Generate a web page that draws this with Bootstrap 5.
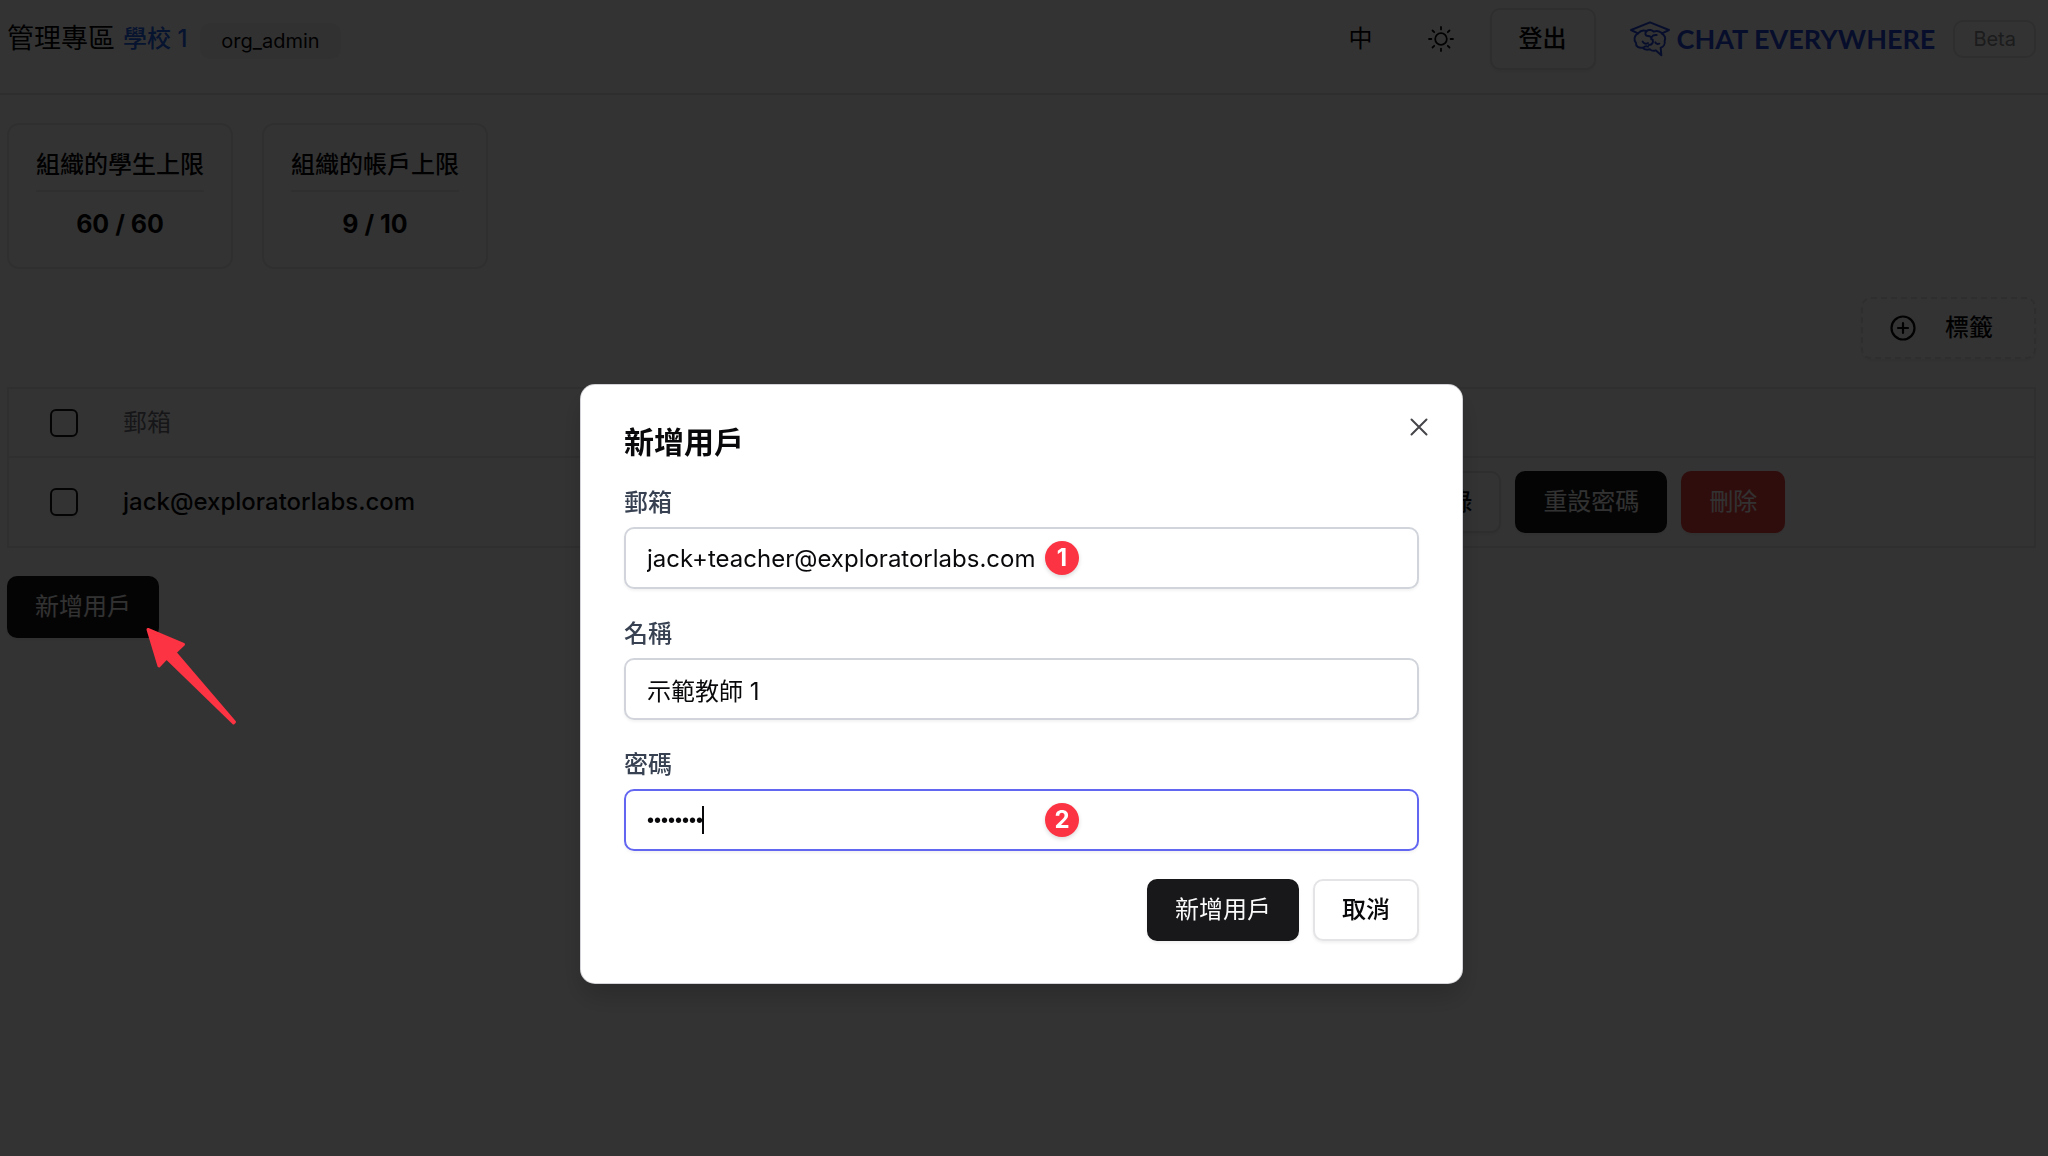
<!DOCTYPE html>
<html lang="zh-Hant">
<head>
<meta charset="utf-8">
<meta name="viewport" content="width=device-width, initial-scale=1">
<title>管理專區</title>
<link href="https://cdn.jsdelivr.net/npm/bootstrap@5.3.0/dist/css/bootstrap.min.css" rel="stylesheet">
<style>
  :root { --line: #e4e4e7; --line-soft: #ebebee; --ink: #09090b; --solid: #18181b; --brand: #2549d8; --mark: #fc3342; }
  body { font-family: Inter, "Noto Sans CJK TC", sans-serif; font-size: 24px; line-height: 28px; color: var(--ink); background: #fff; min-height: 100vh; }
  .page-pad { padding-left: 7px; padding-right: 12px; }
  .topbar { padding-top: 8px; padding-bottom: 23px; border-bottom: 2px solid var(--line); }
  .topbar h1 { font-size: 27px; line-height: 32px; font-weight: 400; }
  .identity { height: 62px; }
  .org-name { color: #2563eb; font-size: 24px; font-weight: 500; }
  .pill { font-size: 20px; line-height: 24px; padding: 6px 21px; border-radius: 10px; }
  .pill-role { background: #f4f4f5; margin: 3px 0 0 13px; }
  .pill-beta { border: 2px solid var(--line); color: #8a8a90; padding: 5px 18px; }
  .ui-btn { --bs-btn-font-size: 24px; --bs-btn-line-height: 28px; --bs-btn-padding-x: 26px; --bs-btn-padding-y: 15px; --bs-btn-border-width: 2px; --bs-btn-border-radius: 10px; --bs-btn-font-weight: 500; box-shadow: 0 2px 3px rgba(0,0,0,.06); }
  .ui-solid { --bs-btn-bg: var(--solid); --bs-btn-border-color: var(--solid); --bs-btn-color: #fafafa; --bs-btn-hover-bg: #303036; --bs-btn-hover-color: #fff; --bs-btn-font-weight: 400; }
  .ui-outline { --bs-btn-bg: #fff; --bs-btn-border-color: var(--line); --bs-btn-color: var(--ink); --bs-btn-hover-bg: #f4f4f5; --bs-btn-padding-x: 27px; }
  .ui-danger { --bs-btn-bg: #ef4444; --bs-btn-border-color: #ef4444; --bs-btn-color: #fafafa; --bs-btn-hover-bg: #dc2626; --bs-btn-font-weight: 400; }
  .ui-dashed { border-style: dashed; padding-right: 41px; gap: 29px; }
  .ui-ghost { width: 62px; height: 62px; padding: 0; border: 0; font-size: 24px; color: var(--ink); }
  .tools { gap: 18px; }
  .brand-link { color: var(--brand); font-family: Lato, sans-serif; font-weight: 700; font-size: 27px; gap: 7px; margin-left: 16px; }
  .page-body { padding-top: 28px; gap: 28px; }
  .quota-row { gap: 29px; }
  .quota { border: 2px solid var(--line-soft); border-radius: 12px; padding: 26px 27px; height: 146px; text-align: center; }
  .quota h2 { font-size: 24px; line-height: 28px; font-weight: 500; padding-bottom: 11px; border-bottom: 2px solid var(--line-soft); margin-bottom: 18px; }
  .quota strong { font-size: 25px; }
  .users { border: 2px solid var(--line-soft); margin: 0; --bs-table-color: var(--ink); --bs-table-bg: transparent; }
  .users > :not(caption) > * > * { padding: 0 9px; vertical-align: middle; border-bottom: 2px solid var(--line-soft); }
  .users thead th { height: 69px; font-weight: 400; color: #71717a; }
  .users tbody td { height: 90px; font-weight: 500; }
  .users tr > :first-child { width: 106px; padding-left: 41px; }
  .users tr > :last-child { width: 32%; }
  .tick { width: 28px; height: 28px; margin: 0; display: block; border: 2px solid var(--solid); border-radius: 6px; box-shadow: 0 2px 3px rgba(0,0,0,.06); }
  .row-actions { gap: 14px; }
  .modal-backdrop { --bs-backdrop-opacity: .8; }
  .user-modal { padding: 0 13px 0 8px; }
  .user-modal .modal-dialog { max-width: 881px; margin: 385px auto 28px; }
  .user-modal .modal-content { --bs-modal-border-radius: 14px; border: 0; padding: 42px 43px; box-shadow: 0 0 0 1px #d4d4d8, 0 14px 26px rgba(0,0,0,.18); color: var(--ink); }
  .user-modal h2 { font-size: 30px; line-height: 30px; font-weight: 600; margin-bottom: 32px; }
  .close-x { top: 30px; right: 31px; width: 24px; height: 24px; padding: 0; border: 0; background: none; line-height: 0; color: #46464a; }
  .fields { gap: 31px; margin-bottom: 28px; }
  .field-label { display: block; margin-bottom: 10px; font-weight: 500; color: #374151; }
  .field-box { height: 62px; padding: 0 21px; font-size: 24px; color: var(--ink); border: 2px solid #d1d5db; border-radius: 10px; box-shadow: 0 2px 3px rgba(0,0,0,.05); }
  .field-active, .field-active:focus { border-color: #6366f1; }
  .field-secret { font-family: "Liberation Sans", sans-serif; font-size: 20px; }
  .caret { left: 78px; top: 17px; width: 2px; height: 28px; background: var(--ink); }
  .step { left: 421px; top: 14px; width: 34px; height: 34px; border-radius: 50%; background: var(--mark); color: #fff; font-weight: 700; box-shadow: 0 2px 4px rgba(0,0,0,.15); }
  .dialog-actions { gap: 14px; }
  .pointer { left: 143px; top: 624px; z-index: 1060; pointer-events: none; }
</style>
</head>
<body>
<header class="topbar page-pad d-flex align-items-start justify-content-between">
  <div class="identity d-flex align-items-center">
    <h1 class="mb-0 d-flex align-items-center gap-2">管理專區 <small class="org-name lh-1">學校 1</small></h1>
    <span class="pill pill-role">org_admin</span>
  </div>
  <div class="tools d-flex align-items-center">
    <button type="button" class="btn ui-ghost" aria-label="語言">中</button>
    <button type="button" class="btn ui-ghost d-flex align-items-center justify-content-center" aria-label="主題">
      <svg width="26" height="26" viewBox="-13 -13 26 26" fill="none" stroke="currentColor" stroke-width="1.8" stroke-linecap="round"><circle r="5.8"/><path d="M0-12v2.4M0 12V9.600M-12 0h2.400M12 0H9.600M-8.500-8.500l1.700 1.700M8.500 8.500l-1.700-1.700M8.500-8.500l-1.700 1.700M-8.500 8.500l1.700-1.700"/></svg>
    </button>
    <button type="button" class="btn ui-btn ui-outline">登出</button>
    <a href="#" class="brand-link d-flex align-items-center text-decoration-none">
      <svg width="40" height="36" viewBox="0 0 120 108" fill="none" stroke="currentColor" stroke-width="6" stroke-linejoin="round" stroke-linecap="round">
        <path d="M24 37 3 27 60 4l57 23-21 10"/>
        <path d="M24 37c7-8 17-10 25-7 8-5 18-3 22 2 12-4 23 0 25 6 8 5 11 14 8 22 2 10-4 18-12 20l2 23-17-15c-7 3-13 1-17-3-10 2-18 1-22-5-12 2-21-4-20-14-8-8-5-23 6-29Z"/>
        <path d="M50 31c-7 6-4 14 4 14 7 0 11 4 10 10M80 42c-10-1-16 3-16 12M38 62c3 6 10 8 16 4M68 56c3 9-2 15-11 16M76 64c2 5 7 6 12 4M40 80c4-4 9-5 14-3"/>
      </svg>
      <span>CHAT EVERYWHERE</span>
    </a>
    <span class="pill pill-beta">Beta</span>
  </div>
</header>

<main class="page-body page-pad d-flex flex-column">
  <div class="quota-row d-flex">
    <section class="quota"><h2>組織的學生上限</h2><strong class="fw-bold">60 / 60</strong></section>
    <section class="quota"><h2>組織的帳戶上限</h2><strong class="fw-bold">9 / 10</strong></section>
  </div>
  <div class="d-flex justify-content-end">
    <button type="button" class="btn ui-btn ui-outline ui-dashed d-flex align-items-center">
      <svg width="26" height="26" viewBox="-13 -13 26 26" fill="none" stroke="currentColor" stroke-width="2.2" stroke-linecap="round"><circle r="11.5"/><path d="M-5 0H5M0-5V5"/></svg>
      標籤
    </button>
  </div>
  <table class="users table">
    <thead><tr>
      <th scope="col"><input class="tick form-check-input" type="checkbox" aria-label="全選"></th>
      <th scope="col">郵箱</th>
      <th scope="col" aria-label="操作"></th>
    </tr></thead>
    <tbody><tr>
      <td><input class="tick form-check-input" type="checkbox" aria-label="選取 jack"></td>
      <td>jack@exploratorlabs.com</td>
      <td><div class="row-actions d-flex">
        <button type="button" class="btn ui-btn ui-outline">記錄</button>
        <button type="button" class="btn ui-btn ui-solid">重設密碼</button>
        <button type="button" class="btn ui-btn ui-danger">刪除</button>
      </div></td>
    </tr></tbody>
  </table>
  <div><button type="button" class="btn ui-btn ui-solid">新增用戶</button></div>
</main>

<div class="modal-backdrop show"></div>
<div class="modal user-modal d-block" role="dialog" aria-modal="true" aria-labelledby="dlgTitle">
  <div class="modal-dialog">
    <form class="modal-content">
      <h2 id="dlgTitle">新增用戶</h2>
      <button type="button" class="close-x position-absolute" aria-label="關閉">
        <svg width="24" height="24" viewBox="0 0 24 24" fill="none" stroke="currentColor" stroke-width="2" stroke-linecap="round"><path d="m4.500 4.500 15 15m0-15-15 15"/></svg>
      </button>
      <div class="fields d-flex flex-column">
        <div>
          <label class="field-label" for="email">郵箱</label>
          <div class="position-relative">
            <input id="email" class="form-control field-box" type="email" value="jack+teacher@exploratorlabs.com">
            <span class="step position-absolute d-flex align-items-center justify-content-center">1</span>
          </div>
        </div>
        <div>
          <label class="field-label" for="name">名稱</label>
          <input id="name" class="form-control field-box" type="text" value="示範教師 1">
        </div>
        <div>
          <label class="field-label" for="secret">密碼</label>
          <div class="position-relative">
            <input id="secret" class="form-control field-box field-secret field-active" type="password" value="password" autocomplete="new-password">
            <span class="caret position-absolute"></span>
            <span class="step position-absolute d-flex align-items-center justify-content-center">2</span>
          </div>
        </div>
      </div>
      <div class="dialog-actions d-flex justify-content-end">
        <button type="submit" class="btn ui-btn ui-solid">新增用戶</button>
        <button type="button" class="btn ui-btn ui-outline">取消</button>
      </div>
    </form>
  </div>
</div>

<svg class="pointer position-absolute" width="100" height="106" viewBox="0 0 100 106" fill="#fc3342" stroke="#fc3342" stroke-width="3" stroke-linejoin="round"><path d="M5 5.500 40.500 20.500 32 28.500 91.500 98 90.500 99 23.500 34 16 42Z"/></svg>

<script src="https://cdn.jsdelivr.net/npm/bootstrap@5.3.0/dist/js/bootstrap.bundle.min.js"></script>
</body>
</html>
